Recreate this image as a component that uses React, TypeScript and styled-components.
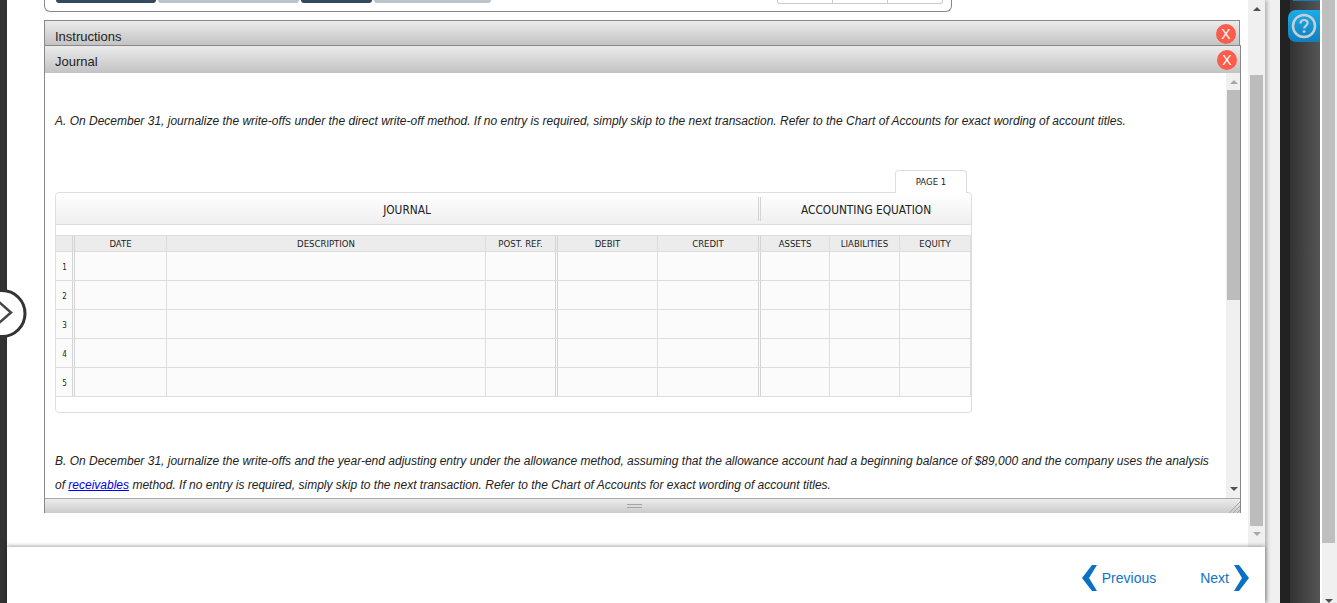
import React from 'react';
import styled, { createGlobalStyle } from 'styled-components';

const GlobalStyle = createGlobalStyle`
  html, body {
    margin: 0;
    padding: 0;
    background: #fff;
    overflow: hidden;
  }
  * {
    box-sizing: border-box;
  }
`;

const Page = styled.div`
  display: flex;
  position: relative;
  width: 1337px;
  height: 603px;
  overflow: hidden;
  font-family: "Liberation Sans", Arial, sans-serif;
`;

const LeftRail = styled.div`
  width: 7px;
  flex: none;
  background: #333;
`;

const Main = styled.div`
  width: 1258px;
  flex: none;
  display: flex;
  flex-direction: column;
  background: #fff;
  position: relative;
  box-shadow: 2px 0 4px rgba(0, 0, 0, 0.28);
`;

const Upper = styled.div`
  height: 547px;
  flex: none;
  display: flex;
`;

const ContentColumn = styled.div`
  width: 1241px;
  flex: none;
  padding-left: 37px;
`;

const TopBox = styled.div`
  width: 908px;
  height: 12px;
  display: flex;
  align-items: flex-start;
  padding-left: 11px;
  border: 1px solid #888;
  border-top: none;
  border-radius: 0 0 6px 6px;
`;

const TopTab = styled.div<{ $width: number; $active?: boolean }>`
  width: ${({ $width }) => $width}px;
  height: 3px;
  margin-right: 2px;
  border-radius: 0 0 3px 3px;
  background: ${({ $active }) => ($active ? '#34495e' : '#bcc3c9')};
`;

const TopPill = styled.div`
  display: flex;
  width: 166px;
  height: 4px;
  margin-left: auto;
  margin-right: 8px;
  border: 1px solid #ccc;
  border-top: none;
  border-radius: 0 0 3px 3px;
`;

const TopPillCell = styled.div`
  flex: 1;
  & + & {
    border-left: 1px solid #ccc;
  }
`;

const Panel = styled.div<{ $width: number }>`
  width: ${({ $width }) => $width}px;
  border: 1px solid #888;
  border-bottom: none;
`;

const InstructionsPanel = styled(Panel)`
  margin-top: 8px;
  height: 25px;
`;

const PanelHeader = styled.div<{ $height: number }>`
  display: flex;
  align-items: center;
  justify-content: space-between;
  height: ${({ $height }) => $height}px;
  padding: 0 3px 0 10px;
  background: linear-gradient(#ebebeb, #c3c3c3);
  font-size: 13px;
  color: #222;
`;

const PanelTitle = styled.span<{ $drop: number }>`
  margin-top: ${({ $drop }) => $drop}px;
`;

const CloseButton = styled.button<{ $drop: number }>`
  width: 20px;
  height: 20px;
  margin-top: ${({ $drop }) => $drop}px;
  padding: 0;
  border: none;
  border-radius: 50%;
  background: #fb5c4b;
  color: #fff;
  font-family: "Liberation Sans", Arial, sans-serif;
  font-size: 14px;
  line-height: 20px;
  text-align: center;
`;

const JournalBody = styled.div`
  display: flex;
  height: 425px;
  overflow: hidden;
  background: #fff;
`;

const JournalText = styled.div`
  width: 1181px;
  flex: none;
  padding: 36px 0 0 10px;
`;

const Instruction = styled.p<{ $top?: number }>`
  margin: ${({ $top = 0 }) => $top}px 0 0;
  width: 1165px;
  font-size: 12px;
  font-style: italic;
  line-height: 24px;
  color: #222;

  a {
    color: #00e;
  }
`;

const PageTabRow = styled.div`
  display: flex;
  justify-content: flex-end;
  width: 917px;
  margin-top: 37px;
  padding-right: 5px;
`;

const PageTab = styled.div`
  width: 72px;
  height: 23px;
  margin-bottom: -1px;
  position: relative;
  background: #fff;
  border: 1px solid #ddd;
  border-bottom: none;
  border-radius: 4px 4px 0 0;
  font-family: "DejaVu Sans Condensed", "DejaVu Sans", sans-serif;
  font-size: 9.5px;
  line-height: 22px;
  text-align: center;
  color: #222;
`;

const JournalBox = styled.div`
  width: 917px;
  height: 221px;
  border: 1px solid #ddd;
  border-radius: 4px;
  font-family: "DejaVu Sans Condensed", "DejaVu Sans", sans-serif;
  color: #222;
`;

const BandRow = styled.div`
  display: flex;
  align-items: center;
  height: 32px;
  margin-bottom: 10px;
  border-bottom: 1px solid #ddd;
  background: linear-gradient(#fff, #efefef);
  border-radius: 4px 4px 0 0;
  font-size: 11.8px;
`;

const BandTitle = styled.div<{ $width: number; $split?: boolean }>`
  width: ${({ $width }) => $width}px;
  height: 24px;
  line-height: 26px;
  text-align: center;
  border-left: ${({ $split }) => ($split ? '3px double #d4d4d4' : 'none')};
`;

const GridRow = styled.div<{ $head?: boolean }>`
  display: flex;
  height: ${({ $head }) => ($head ? 17 : 29)}px;
  border-top: ${({ $head }) => ($head ? '1px solid #ddd' : 'none')};
  border-bottom: 1px solid #ddd;
  background: ${({ $head }) => ($head ? '#ececec' : '#fbfbfb')};
`;

const GridCell = styled.div<{ $width: number; $double?: boolean }>`
  width: ${({ $width }) => $width}px;
  flex: none;
  font-size: 9.5px;
  text-align: center;
  line-height: 16px;
  border-right: ${({ $double }) => ($double ? '3px double #d4d4d4' : '1px solid #ddd')};
`;

const RowNumber = styled(GridCell)`
  line-height: 31px;
  padding-left: 1px;
  font-size: 8px;
`;

const InnerScroll = styled.div`
  width: 14px;
  flex: none;
  display: flex;
  flex-direction: column;
  align-items: center;
  background: #f0f0f0;
  padding-left: 1px;
`;

const ScrollArrow = styled.div<{ $down?: boolean; $dim?: boolean }>`
  width: 0;
  height: 0;
  flex: none;
  border-left: 4px solid transparent;
  border-right: 4px solid transparent;
  ${({ $down, $dim }) => {
    const color = $dim ? '#a8a8a8' : '#505050';
    return $down ? `border-top: 4px solid ${color};` : `border-bottom: 4px solid ${color};`;
  }}
`;

const InnerThumb = styled.div`
  width: 13px;
  height: 210px;
  margin-top: 6px;
  background: #bcbcbc;
`;

const InnerArrowTop = styled(ScrollArrow)`
  margin-top: 7px;
`;

const InnerArrowBottom = styled(ScrollArrow)`
  margin-top: 187px;
`;

const PanelFooter = styled.div`
  position: relative;
  display: flex;
  justify-content: center;
  align-items: center;
  height: 15px;
  padding-right: 17px;
  border-top: 1px solid #a8a8a8;
  background: linear-gradient(#ececec, #cbcbcb);
`;

const Grip = styled.div`
  width: 15px;
  height: 4px;
  border-top: 1px solid #a5a5a5;
  border-bottom: 1px solid #a5a5a5;
`;

const ResizeHatch = styled.svg`
  position: absolute;
  right: 0;
  bottom: 0;
`;

const OuterScroll = styled.div`
  width: 17px;
  flex: none;
  display: flex;
  flex-direction: column;
  align-items: center;
  background: #f0f0f0;
`;

const OuterArrowTop = styled(ScrollArrow)`
  margin-top: 7px;
`;

const OuterThumb = styled.div`
  width: 13px;
  height: 451px;
  margin-top: 64px;
  background: #bcbcbc;
`;

const OuterArrowBottom = styled(ScrollArrow)`
  margin-top: 6px;
`;

const Footer = styled.div`
  flex: 1;
  display: flex;
  align-items: flex-start;
  justify-content: flex-end;
  padding: 18px 16px 0 0;
  background: #fff;
  position: relative;
  box-shadow: 0 -1px 4px rgba(0, 0, 0, 0.35);
`;

const NavLink = styled.a<{ $gap: number }>`
  display: flex;
  align-items: center;
  gap: 5px;
  height: 26px;
  margin-left: ${({ $gap }) => $gap}px;
  font-size: 14px;
  color: #1273c4;
`;

const Gutter = styled.div`
  width: 15px;
  flex: none;
  background: #f0f0f0;
`;

const DarkPanel = styled.div`
  width: 40px;
  flex: none;
  display: flex;
  flex-direction: column;
  align-items: flex-end;
  background: linear-gradient(90deg, #222 0, #222 10px, #333 10px, #555 100%);
`;

const HelpTabEdge = styled.div`
  width: 27px;
  height: 1px;
  margin-bottom: 9px;
  background: #117fbe;
`;

const HelpButton = styled.div`
  display: flex;
  align-items: center;
  justify-content: center;
  width: 32px;
  height: 32px;
  border-radius: 8px 0 0 8px;
  background: linear-gradient(#1bace9, #117fbe);
`;

const Sliver = styled.div`
  width: 2px;
  flex: none;
  background: #fff;
`;

const PageScroll = styled.div`
  width: 15px;
  flex: none;
  display: flex;
  flex-direction: column;
  background: #f0f0f0;
`;

const PageThumb = styled.div`
  width: 13px;
  height: 545px;
  background: #bfbfbf;
`;

const PageArrow = styled(ScrollArrow)`
  margin: 56px 0 0 3px;
`;

const DrawerToggle = styled.svg`
  position: absolute;
  left: 0;
  top: 286px;
`;

const columns = [
  { label: 'DATE', width: 92 },
  { label: 'DESCRIPTION', width: 319 },
  { label: 'POST. REF.', width: 72, double: true },
  { label: 'DEBIT', width: 100 },
  { label: 'CREDIT', width: 103, double: true },
  { label: 'ASSETS', width: 69 },
  { label: 'LIABILITIES', width: 70 },
  { label: 'EQUITY', width: 71 },
];

const rows = [1, 2, 3, 4, 5];

const Chevron = ({ right }: { right?: boolean }) => (
  <svg width="15" height="26" viewBox="0 0 15 26">
    <polygon
      points={right ? '0,0 5,0 15,13 5,26 0,26 8,13' : '15,0 10,0 0,13 10,26 15,26 7,13'}
      fill="#0a70c4"
    />
  </svg>
);

const App = () => {
  return (
    <Page>
      <GlobalStyle />
      <LeftRail />
      <Main>
        <Upper>
          <ContentColumn>
            <TopBox>
              <TopTab $width={100} $active />
              <TopTab $width={141} />
              <TopTab $width={71} $active />
              <TopTab $width={117} />
              <TopPill>
                <TopPillCell />
                <TopPillCell />
                <TopPillCell />
              </TopPill>
            </TopBox>
            <InstructionsPanel $width={1196}>
              <PanelHeader $height={24}>
                <PanelTitle $drop={7}>Instructions</PanelTitle>
                <CloseButton $drop={2}>X</CloseButton>
              </PanelHeader>
            </InstructionsPanel>
            <Panel $width={1197}>
              <PanelHeader $height={27}>
                <PanelTitle $drop={3}>Journal</PanelTitle>
                <CloseButton $drop={0}>X</CloseButton>
              </PanelHeader>
              <JournalBody>
                <JournalText>
                  <Instruction>
                    A. On December 31, journalize the write-offs under the direct write-off method. If no entry is
                    required, simply skip to the next transaction. Refer to the Chart of Accounts for exact wording of
                    account titles.
                  </Instruction>
                  <PageTabRow>
                    <PageTab>PAGE 1</PageTab>
                  </PageTabRow>
                  <JournalBox>
                    <BandRow>
                      <BandTitle $width={702}>JOURNAL</BandTitle>
                      <BandTitle $width={213} $split>ACCOUNTING EQUATION</BandTitle>
                    </BandRow>
                    <GridRow $head>
                      <GridCell $width={19} $double />
                      {columns.map((column) => (
                        <GridCell key={column.label} $width={column.width} $double={column.double}>
                          {column.label}
                        </GridCell>
                      ))}
                    </GridRow>
                    {rows.map((row) => (
                      <GridRow key={row}>
                        <RowNumber $width={19} $double>{row}</RowNumber>
                        {columns.map((column) => (
                          <GridCell key={column.label} $width={column.width} $double={column.double} />
                        ))}
                      </GridRow>
                    ))}
                  </JournalBox>
                  <Instruction $top={36}>
                    B. On December 31, journalize the write-offs and the year-end adjusting entry under the allowance
                    method, assuming that the allowance account had a beginning balance of $89,000 and the company uses
                    the analysis of <a href="#receivables">receivables</a> method. If no entry is required, simply skip
                    to the next transaction. Refer to the Chart of Accounts for exact wording of account titles.
                  </Instruction>
                </JournalText>
                <InnerScroll>
                  <InnerArrowTop $dim />
                  <InnerThumb />
                  <InnerArrowBottom $down />
                </InnerScroll>
              </JournalBody>
              <PanelFooter>
                <Grip />
                <ResizeHatch width="12" height="12" viewBox="0 0 12 12">
                  <path d="M1 12L12 1M5 12L12 5M9 12L12 9" stroke="#a5a5a5" strokeWidth="1" />
                </ResizeHatch>
              </PanelFooter>
            </Panel>
          </ContentColumn>
          <OuterScroll>
            <OuterArrowTop />
            <OuterThumb />
            <OuterArrowBottom $down $dim />
          </OuterScroll>
        </Upper>
        <Footer>
          <NavLink $gap={0}>
            <Chevron />
            Previous
          </NavLink>
          <NavLink $gap={44}>
            Next
            <Chevron right />
          </NavLink>
        </Footer>
      </Main>
      <Gutter />
      <DarkPanel>
        <HelpTabEdge />
        <HelpButton>
          <svg width="26" height="26" viewBox="0 0 26 26">
            <circle cx="13" cy="13" r="11" fill="none" stroke="#c5cfd5" strokeWidth="2.5" />
            <path
              d="M9.5 10.5c0-2.2 1.6-3.5 3.6-3.5s3.5 1.2 3.5 3.1c0 2.6-3.5 2.8-3.5 5.4"
              fill="none"
              stroke="#c5cfd5"
              strokeWidth="2.2"
            />
            <circle cx="13.1" cy="18.6" r="1.4" fill="#c5cfd5" />
          </svg>
        </HelpButton>
      </DarkPanel>
      <Sliver />
      <PageScroll>
        <PageThumb />
        <PageArrow $down />
      </PageScroll>
      <DrawerToggle width="28" height="54" viewBox="0 0 28 54">
        <circle cx="2" cy="27.5" r="23" fill="#fff" stroke="#333" strokeWidth="3" />
        <path d="M-1 16L11 26.5L-1 37" fill="none" stroke="#444" strokeWidth="2.5" />
      </DrawerToggle>
    </Page>
  );
};

export default App;
